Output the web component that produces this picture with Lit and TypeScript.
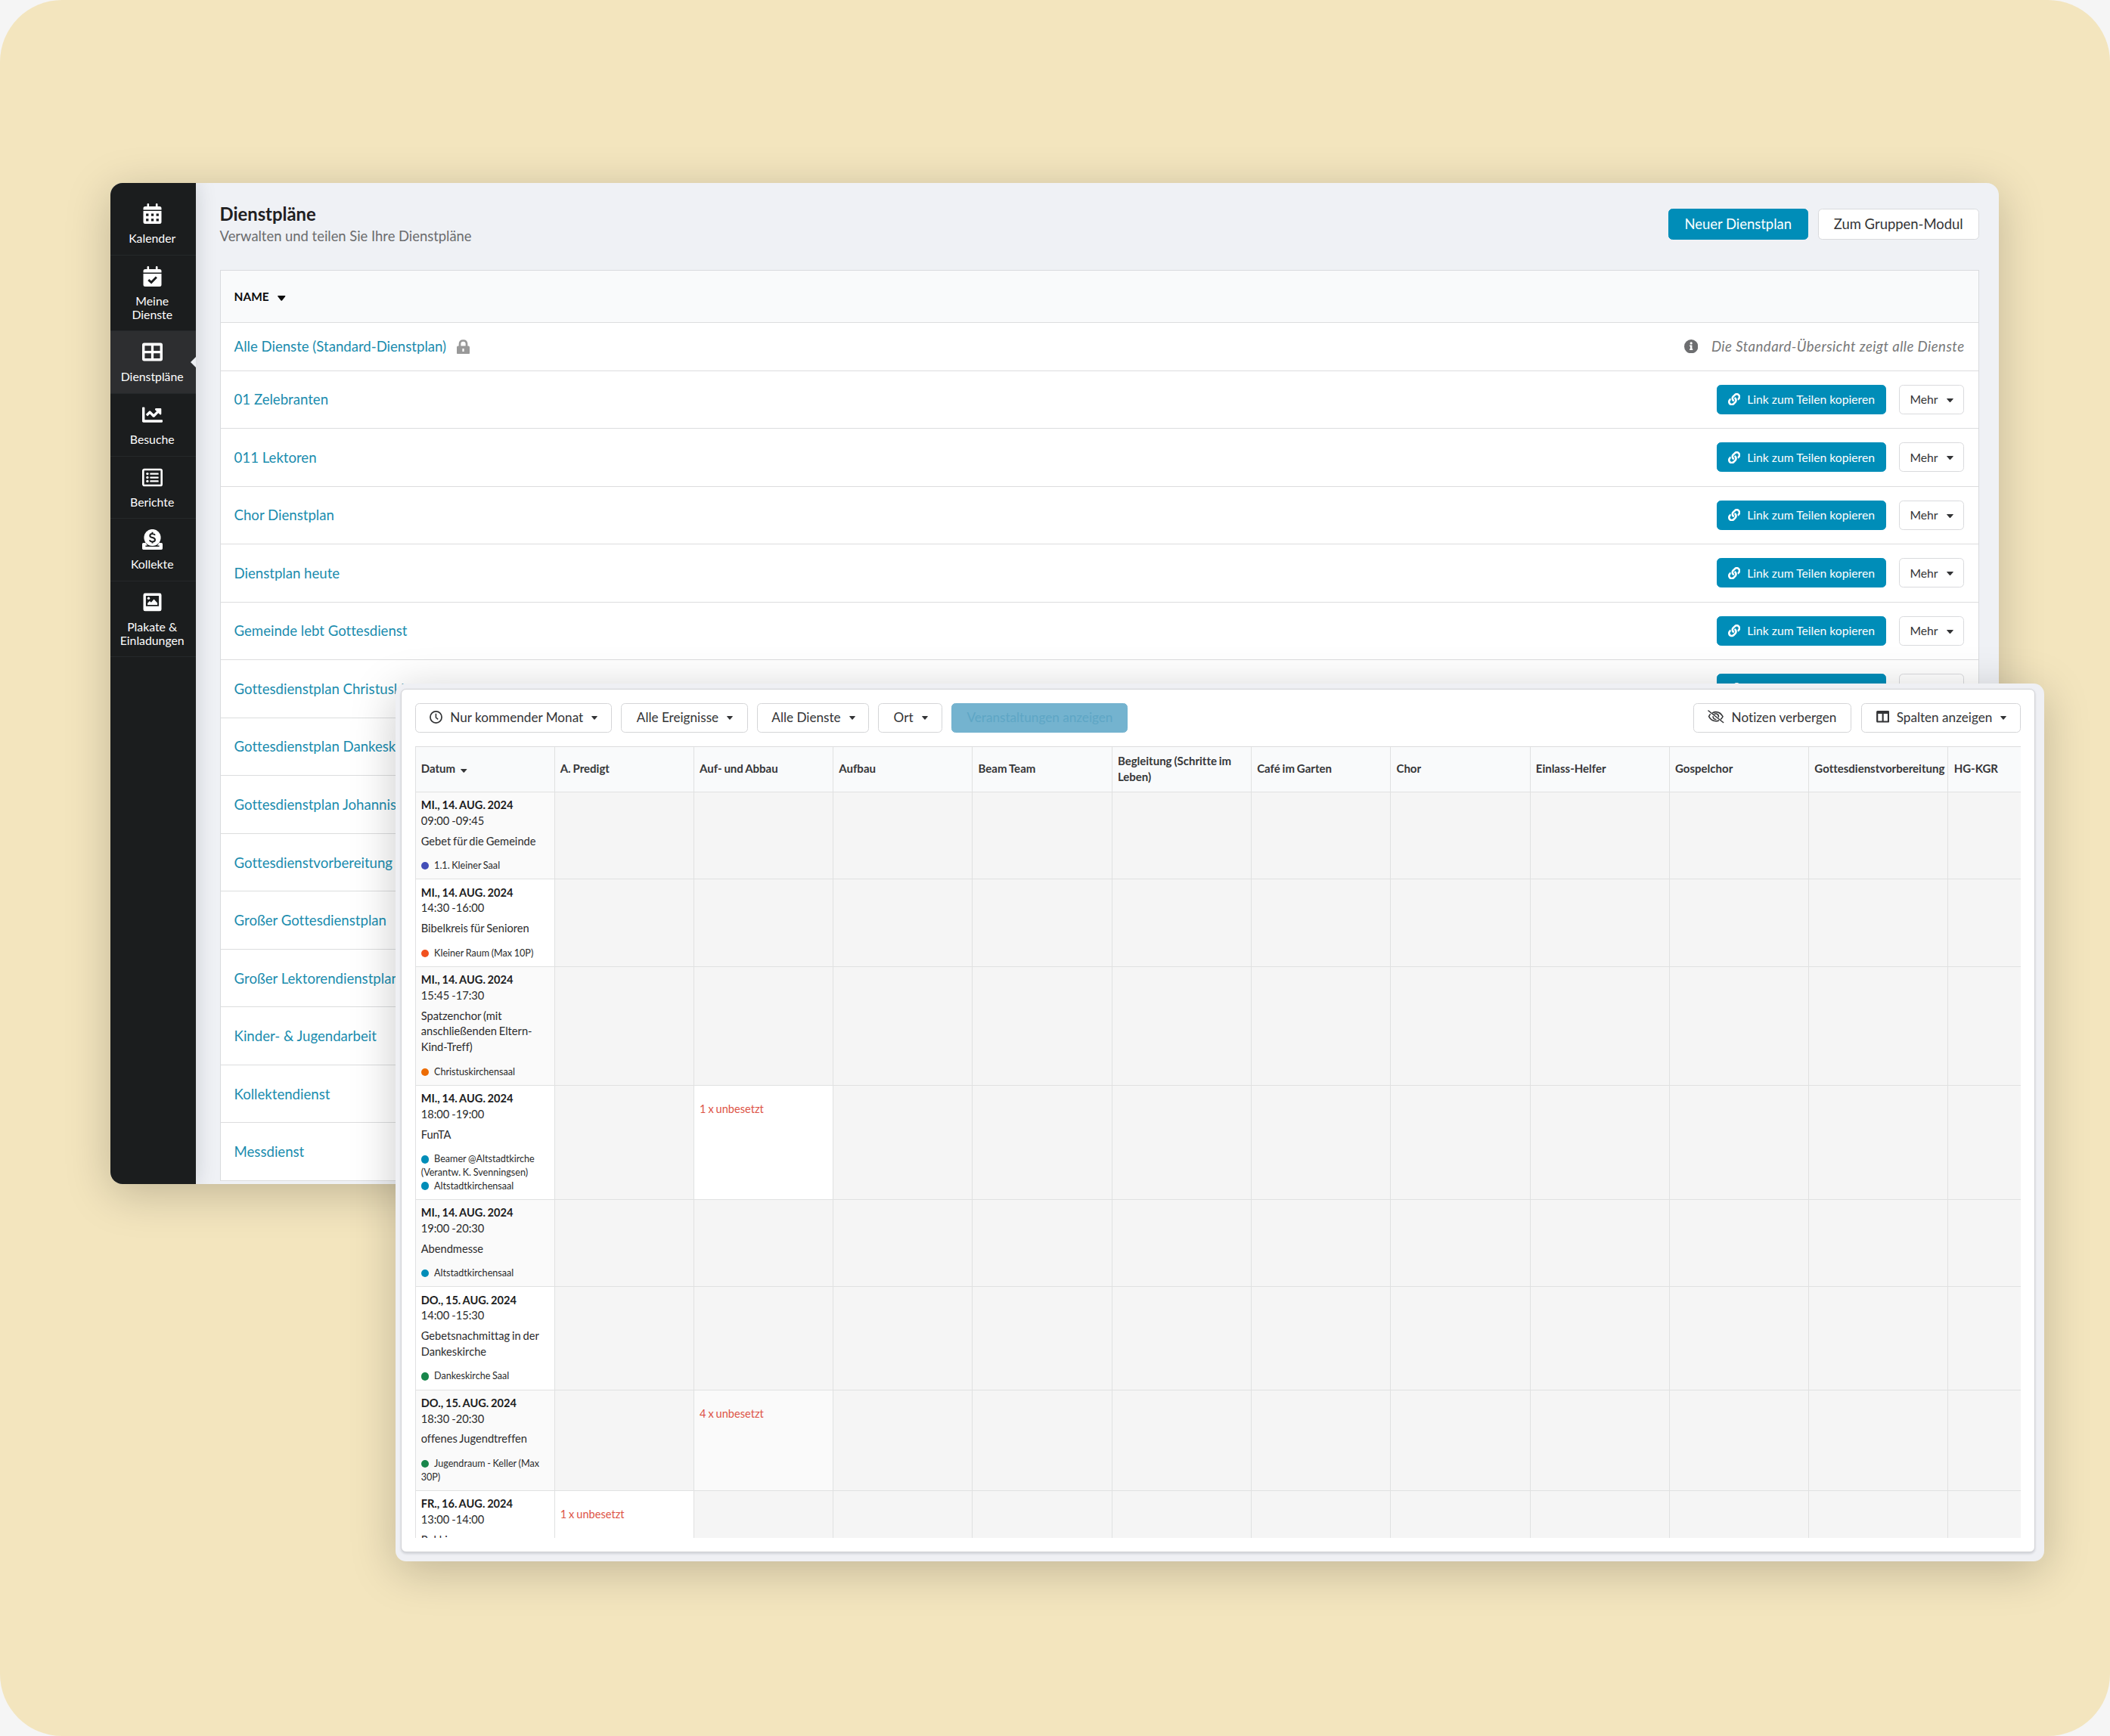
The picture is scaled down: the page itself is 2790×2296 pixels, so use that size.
import { LitElement, html, svg, css, nothing, type TemplateResult } from "lit";
import { customElement } from "lit/decorators.js";
import { classMap } from "lit/directives/class-map.js";
import { styleMap } from "lit/directives/style-map.js";

type IconName =
  | "calendar" | "check" | "table" | "chart" | "list" | "donate" | "poster"
  | "link" | "lock" | "info" | "clock" | "eyeoff" | "columns";

const CAL_TOP = "M3 4H5V1.2Q5 0 6.3 0T7.6 1.2V4H16.4V1.2Q16.4 0 17.7 0T19 1.2V4H21.5Q24 4 24 6.5V8.6H0V6.5Q0 4 2.5 4Z";

const icons: Record<IconName, { box: string; art: TemplateResult }> = {
  calendar: {
    box: "0 0 24 27",
    art: svg`<path fill-rule="evenodd" fill="currentColor" d="${CAL_TOP}M0 9.9H24V24.5Q24 27 21.5 27H2.5Q0 27 0 24.5ZM3.6 13.4V16.7H6.9V13.4ZM10.4 13.4V16.7H13.7V13.4ZM17.1 13.4V16.7H20.4V13.4ZM3.6 20.2V23.5H6.9V20.2ZM10.4 20.2V23.5H13.7V20.2ZM17.1 20.2V23.5H20.4V20.2Z"/>`,
  },
  check: {
    box: "0 0 24 27",
    art: svg`<path fill="currentColor" d="${CAL_TOP}M0 9.9H24V24.5Q24 27 21.5 27H2.5Q0 27 0 24.5Z"/>
      <path d="M6.8 18.2L10.6 21.6L17.4 14.6" fill="none" stroke="#1b1d1e" stroke-width="2.9"/>`,
  },
  table: {
    box: "0 0 27 27",
    art: svg`<path fill-rule="evenodd" fill="currentColor" d="M2.6 1.6H24.4Q27 1.6 27 4.2V22.8Q27 25.4 24.4 25.4H2.6Q0 25.4 0 22.8V4.2Q0 1.6 2.6 1.6ZM3.4 5.2V12H11.9V5.2ZM15.1 5.2V12H23.6V5.2ZM3.4 15.2V22H11.9V15.2ZM15.1 15.2V22H23.6V15.2Z"/>`,
  },
  chart: {
    box: "0 0 512 512",
    art: svg`<path fill="currentColor" d="M496 384H64V80c0-8.84-7.16-16-16-16H16C7.16 64 0 71.16 0 80v336c0 17.67 14.33 32 32 32h464c8.84 0 16-7.16 16-16v-32c0-8.84-7.16-16-16-16zM464 96H345.94c-21.38 0-32.09 25.85-16.97 40.97l32.4 32.4L288 242.75l-73.37-73.37c-12.5-12.5-32.76-12.5-45.25 0l-68.69 68.69c-6.25 6.25-6.25 16.38 0 22.63l22.62 22.62c6.25 6.25 16.38 6.25 22.63 0L192 237.25l73.37 73.37c12.5 12.5 32.76 12.5 45.25 0l96-96 32.4 32.4c15.12 15.12 40.97 4.41 40.97-16.97V112c.01-8.84-7.15-16-15.99-16z"/>`,
  },
  list: {
    box: "0 0 27 27",
    art: svg`<rect x="1.3" y="3" width="24.4" height="21" rx="1.6" fill="none" stroke="currentColor" stroke-width="2.6"/>
      <g fill="currentColor"><circle cx="6.9" cy="8.6" r="1.7"/><circle cx="6.9" cy="13.5" r="1.7"/><circle cx="6.9" cy="18.4" r="1.7"/>
      <rect x="10.3" y="7.5" width="11.4" height="2.3" rx=".6"/><rect x="10.3" y="12.4" width="11.4" height="2.3" rx=".6"/><rect x="10.3" y="17.3" width="11.4" height="2.3" rx=".6"/></g>`,
  },
  donate: {
    box: "0 0 27 27",
    art: svg`<path fill="currentColor" d="M1.6 18H4.6L7 21.6H4.4V23H22.6V21.6H20L22.4 18H25.4Q27 18 27 19.6V25.3Q27 27 25.4 27H1.6Q0 27 0 25.3V19.6Q0 18 1.6 18Z"/>
      <circle cx="13.5" cy="11" r="11.1" fill="currentColor"/>
      <path d="M16.9 7.9Q16.2 6 13.6 6Q10.3 6 10.3 8.4Q10.3 10.3 13.5 11Q17 11.8 17 14Q17 16.4 13.6 16.4Q10.6 16.4 9.9 14.2M13.5 3.8V6M13.5 16.2V18.4" fill="none" stroke="#1b1d1e" stroke-width="2"/>`,
  },
  poster: {
    box: "0 0 24 27",
    art: svg`<path fill-rule="evenodd" fill="currentColor" d="M2.4 1.5H21.6Q24 1.5 24 3.9V22.9Q24 25.3 21.6 25.3H2.4Q0 25.3 0 22.9V3.9Q0 1.5 2.4 1.5ZM3.4 4.9V18.7H20.6V4.9Z"/>
      <circle cx="7" cy="8.3" r="1.7" fill="currentColor"/><path fill="currentColor" d="M5.6 17V14.8L8.4 12L10.4 13.8L14 9.6L18.6 14.6V17Z"/>`,
  },
  link: {
    box: "0 0 512 512",
    art: svg`<path fill="currentColor" d="M326.612 185.391c59.747 59.809 58.927 155.698.36 214.59-.11.12-.24.25-.36.37l-67.2 67.2c-59.27 59.27-155.699 59.262-214.96 0-59.27-59.26-59.27-155.7 0-214.96l37.106-37.106c9.84-9.84 26.786-3.3 27.294 10.606.648 17.722 3.826 35.527 9.69 52.721 1.986 5.822.567 12.262-3.783 16.612l-13.087 13.087c-28.026 28.026-28.905 73.66-1.155 101.96 28.024 28.579 74.086 28.749 102.325.51l67.2-67.19c28.191-28.191 28.073-73.757 0-101.83-3.701-3.694-7.429-6.564-10.341-8.569a16.037 16.037 0 0 1-6.947-12.606c-.396-10.567 3.348-21.456 11.698-29.806l21.054-21.055c5.521-5.521 14.182-6.199 20.584-1.731a152.482 152.482 0 0 1 20.522 17.197zM467.547 44.449c-59.261-59.262-155.69-59.27-214.96 0l-67.2 67.2c-.12.12-.25.25-.36.37-58.566 58.892-59.387 154.781.36 214.59a152.454 152.454 0 0 0 20.521 17.196c6.402 4.468 15.064 3.789 20.584-1.731l21.054-21.055c8.35-8.35 12.094-19.239 11.698-29.806a16.037 16.037 0 0 0-6.947-12.606c-2.912-2.005-6.64-4.875-10.341-8.569-28.073-28.073-28.191-73.639 0-101.83l67.2-67.19c28.239-28.239 74.3-28.069 102.325.51 27.75 28.3 26.872 73.934-1.155 101.96l-13.087 13.087c-4.35 4.35-5.769 10.79-3.783 16.612 5.864 17.194 9.042 34.999 9.69 52.721.509 13.906 17.454 20.446 27.294 10.606l37.106-37.106c59.271-59.259 59.271-155.699.001-214.959z"/>`,
  },
  lock: {
    box: "0 0 17 19.5",
    art: svg`<path d="M4 9V5.8Q4 1.5 8.5 1.5T13 5.8V9" fill="none" stroke="currentColor" stroke-width="2.7"/>
      <path fill-rule="evenodd" fill="currentColor" d="M1.8 8.4H15.2Q17 8.4 17 10.2V17.7Q17 19.5 15.2 19.5H1.8Q0 19.5 0 17.7V10.2Q0 8.4 1.8 8.4ZM7.4 12V16H9.6V12Z"/>`,
  },
  info: {
    box: "0 0 18 18",
    art: svg`<circle cx="9" cy="9" r="9" fill="currentColor"/>
      <path fill="#fff" d="M9 3.3A1.55 1.55 0 1 1 9 6.4A1.55 1.55 0 1 1 9 3.3ZM7 7.4H10.2V12.1H11V13.7H7V12.1H7.8V9H7Z"/>`,
  },
  clock: {
    box: "0 0 17 17",
    art: svg`<circle cx="8.5" cy="8.5" r="7.6" fill="none" stroke="currentColor" stroke-width="1.7"/>
      <path d="M8.4 3.8V9L11.2 11.4" fill="none" stroke="currentColor" stroke-width="1.6"/>`,
  },
  eyeoff: {
    box: "0 0 22 18",
    art: svg`<g fill="none" stroke="currentColor" stroke-width="1.6" stroke-linecap="round">
      <path d="M1 1L21 16.8"/><path d="M6.8 3.8Q8.8 2.7 11 2.7Q17 2.7 20.4 8.9Q19.6 10.6 18 12.1"/>
      <path d="M3.4 5.9Q2.3 7.2 1.6 8.9Q5 15.1 11 15.1Q13 15.1 14.8 14.3"/>
      <path d="M9.3 5.4Q10.4 4.8 11.8 5.1Q15 6 14.7 9.3"/><path d="M7.2 8.9Q7.4 12.3 11 12.7"/></g>`,
  },
  columns: {
    box: "0 0 17 15.5",
    art: svg`<path fill-rule="evenodd" fill="currentColor" d="M1.5 0H15.5Q17 0 17 1.5V14Q17 15.5 15.5 15.5H1.5Q0 15.5 0 14V1.5Q0 0 1.5 0ZM2.2 4.1V13.4H7.5V4.1ZM9.6 4.1V13.4H14.8V4.1Z"/>`,
  },
};

const icon = (name: IconName, cls = "") =>
  html`<svg class="icon ${cls}" viewBox=${icons[name].box} aria-hidden="true">${icons[name].art}</svg>`;

const caret = (cls = "") =>
  html`<svg class="caret ${cls}" viewBox="0 0 10 6" preserveAspectRatio="none" aria-hidden="true"><path d="M.8 0H9.2Q10.4 .2 9.6 1L5.7 5.5Q5 6.2 4.3 5.5L.4 1Q-.4 .2 .8 0Z" fill="currentColor"/></svg>`;

const shared = css`
  * { box-sizing: border-box; }
  .icon, .caret { display: block; flex: none; }
  .btn {
    display: flex; align-items: center; justify-content: center; flex: none;
    border: 1px solid #d9dadd; border-radius: 5.5px; background: #fff; color: #333436; white-space: nowrap;
  }
  .btn.primary { background: #008db8; border-color: #008db8; color: #fff; }
`;

interface NavItem { icon: IconName; lines: string[]; active?: boolean }

const nav: NavItem[] = [
  { icon: "calendar", lines: ["Kalender"] },
  { icon: "check", lines: ["Meine", "Dienste"] },
  { icon: "table", lines: ["Dienstpläne"], active: true },
  { icon: "chart", lines: ["Besuche"] },
  { icon: "list", lines: ["Berichte"] },
  { icon: "donate", lines: ["Kollekte"] },
  { icon: "poster", lines: ["Plakate &", "Einladungen"] },
];

@customElement("side-nav")
class SideNav extends LitElement {
  static styles = [shared, css`
    :host {
      display: flex; flex-direction: column; flex: none; width: 113.4px; padding-top: 13.4px;
      background: #1b1d1e; color: #fff; position: relative; box-shadow: 0 0 26px rgba(20, 24, 40, .16);
    }
    .item {
      display: flex; flex-direction: column; align-items: center; position: relative;
      padding: 14px 3px 12.8px 0; border-bottom: 1px solid #25282a;
      font-size: 15.8px; line-height: 17.8px; text-align: center;
    }
    .item.active { background: #2d2e30; }
    .item.active::after {
      content: ""; position: absolute; right: 0; top: 34px;
      border: 7.5px solid transparent; border-right-color: #eceef2; border-left: 0;
    }
    .icon { width: 27px; height: 27px; margin-bottom: 10px; }
    .line { display: block; }
  `];
  render() {
    return nav.map((n) => html`
      <div class=${classMap({ item: true, active: !!n.active })}>
        ${icon(n.icon)}
        ${n.lines.map((l) => html`<span class="line">${l}</span>`)}
      </div>`);
  }
}

const plans = [
  "01 Zelebranten", "011 Lektoren", "Chor Dienstplan", "Dienstplan heute", "Gemeinde lebt Gottesdienst",
  "Gottesdienstplan Christuskirche", "Gottesdienstplan Dankeskirche", "Gottesdienstplan Johannis",
  "Gottesdienstvorbereitung", "Großer Gottesdienstplan", "Großer Lektorendienstplan",
  "Kinder- & Jugendarbeit", "Kollektendienst", "Messdienst",
];

@customElement("plan-list")
class PlanList extends LitElement {
  static styles = [shared, css`
    :host { display: block; flex: 1; min-width: 0; padding: 0 26.5px 0 31.2px; font-size: 18.6px; color: #1f2022; }
    .head { display: flex; justify-content: space-between; height: 115px; }
    .title { margin: 26px 0 0; font-size: 23.8px; line-height: 30px; font-weight: 700; }
    .sub { margin: 2px 0 0; font-size: 18.4px; line-height: 24px; color: #6b6c6e; }
    .actions { display: flex; gap: 13.5px; padding-top: 34.4px; }
    .actions .btn { height: 41px; font-size: 18.45px; width: 212.5px; padding-bottom: 1px; }
    .actions .btn.primary { width: 184.6px; }
    .grid { border: 1px solid #d9dbde; border-bottom: 0; background: #fff; }
    .row {
      display: flex; align-items: center; height: 76.54px; padding: 0 18px; border-bottom: 1px solid #dcddde;
    }
    .row.columns { height: 69px; background: #f9fafb; font-size: 15.4px; font-weight: 700; color: #0c0c0d; }
    .row.first { height: 63.5px; }
    .row.columns .caret { width: 10.5px; height: 7px; margin: 4px 0 0 11.5px; }
    .name { flex: 1; display: flex; align-items: center; color: #1a8cae; white-space: nowrap; }
    .name .icon { width: 17px; height: 19.5px; margin-left: 13.5px; color: #999; }
    .note { display: flex; align-items: center; color: #777879; font-style: italic; letter-spacing: .45px; }
    .note .icon { width: 18.4px; height: 18.4px; margin-right: 18px; color: #6d6e70; }
    .row .btn { height: 39px; font-size: 15.7px; width: 86px; margin-left: 17px; margin-right: .5px; }
    .row .btn.primary { width: 224.5px; margin: 0; }
    .btn .icon { width: 16.3px; height: 16.3px; margin-right: 9.5px; }
    .btn .caret { width: 9px; height: 5.2px; margin: 2px 0 0 11px; }
  `];
  render() {
    return html`
      <div class="head">
        <div>
          <h1 class="title">Dienstpläne</h1>
          <p class="sub">Verwalten und teilen Sie Ihre Dienstpläne</p>
        </div>
        <div class="actions">
          <div class="btn primary">Neuer Dienstplan</div>
          <div class="btn">Zum Gruppen-Modul</div>
        </div>
      </div>
      <div class="grid">
        <div class="row columns">NAME ${caret()}</div>
        <div class="row first">
          <div class="name">Alle Dienste (Standard-Dienstplan)${icon("lock")}</div>
          <div class="note">${icon("info")}Die Standard-Übersicht zeigt alle Dienste</div>
        </div>
        ${plans.map((p) => html`
          <div class="row">
            <div class="name">${p}</div>
            <div class="btn primary">${icon("link")}Link zum Teilen kopieren</div>
            <div class="btn">Mehr${caret()}</div>
          </div>`)}
      </div>`;
  }
}

interface Room { color: string; name: string }
interface EventRow { date: string; time: string; name: string; rooms: Room[]; open?: [number, string] }

const columns = [
  "A. Predigt", "Auf- und Abbau", "Aufbau", "Beam Team", "Begleitung (Schritte im Leben)", "Café im Garten",
  "Chor", "Einlass-Helfer", "Gospelchor", "Gottesdienstvorbereitung", "HG-KGR",
];

const BLUE = "#008db8";
const GREEN = "#18864b";

const events: EventRow[] = [
  { date: "MI., 14. AUG. 2024", time: "09:00 -09:45", name: "Gebet für die Gemeinde", rooms: [{ color: "#444fb8", name: "1.1. Kleiner Saal" }] },
  { date: "MI., 14. AUG. 2024", time: "14:30 -16:00", name: "Bibelkreis für Senioren", rooms: [{ color: "#f1511f", name: "Kleiner Raum (Max 10P)" }] },
  { date: "MI., 14. AUG. 2024", time: "15:45 -17:30", name: "Spatzenchor (mit anschließenden Eltern-Kind-Treff)", rooms: [{ color: "#ec6c04", name: "Christuskirchensaal" }] },
  { date: "MI., 14. AUG. 2024", time: "18:00 -19:00", name: "FunTA", rooms: [{ color: BLUE, name: "Beamer @Altstadtkirche (Verantw. K. Svenningsen)" }, { color: BLUE, name: "Altstadtkirchensaal" }], open: [1, "1 x unbesetzt"] },
  { date: "MI., 14. AUG. 2024", time: "19:00 -20:30", name: "Abendmesse", rooms: [{ color: BLUE, name: "Altstadtkirchensaal" }] },
  { date: "DO., 15. AUG. 2024", time: "14:00 -15:30", name: "Gebetsnachmittag in der Dankeskirche", rooms: [{ color: GREEN, name: "Dankeskirche Saal" }] },
  { date: "DO., 15. AUG. 2024", time: "18:30 -20:30", name: "offenes Jugendtreffen", rooms: [{ color: GREEN, name: "Jugendraum - Keller (Max 30P)" }], open: [1, "4 x unbesetzt"] },
  { date: "FR., 16. AUG. 2024", time: "13:00 -14:00", name: "Pokki", rooms: [], open: [0, "1 x unbesetzt"] },
];

@customElement("duty-board")
class DutyBoard extends LitElement {
  static styles = [shared, css`
    :host {
      display: flex; flex-direction: column; height: 100%; padding: 18px 18.5px 18.5px 18px; background: #fff;
      border: 1px solid #d3d4d7; border-radius: 7px; box-shadow: 0 1.5px 3px rgba(30, 34, 50, .15); color: #2a2b2c;
    }
    .bar { display: flex; gap: 12.7px; height: 57.3px; flex: none; }
    .bar .btn { height: 39px; font-size: 17.15px; border-color: #d4d5d7; padding-bottom: 1px; }
    .bar .period { width: 260.2px; }
    .bar .kinds { width: 167.2px; }
    .bar .duties { width: 147.5px; }
    .bar .place { width: 84.3px; }
    .bar .notes { width: 209.2px; }
    .bar .shown { width: 210.8px; }
    .bar .btn.primary { width: 233px; background: #74b3cf; border-color: #74b3cf; color: #5ea6c5; }
    .spacer { flex: 1; }
    .bar .clock { width: 17px; height: 17px; margin: -1px 10.3px 0 0; }
    .bar .eyeoff { width: 21.6px; height: 17.7px; margin: -1px 10px 0 -1px; }
    .bar .columns { width: 17.2px; height: 15.5px; margin: -1px 10px 0 0; }
    .bar .caret { width: 8px; height: 4.8px; margin: 2px -1px 0 11px; }
    .sheet { flex: 1; min-height: 0; overflow: hidden; border-top: 1px solid #dcddde; border-left: 1px solid #e0e1e2; }
    .line { display: grid; grid-template-columns: 184px repeat(10, 184.3px) 1fr; border-bottom: 1px solid #e0e1e1; }
    .line.top { height: 59.9px; background: #f9fafb; font-size: 15px; font-weight: 700; line-height: 20.7px; color: #353638; word-spacing: -.6px; }
    .line.top .cell { display: flex; align-items: center; background: none; padding: 0 0 1px 7.2px; }
    .line.top .caret { width: 8.5px; height: 5px; margin: 5px 0 0 7px; }
    .cell { background: #f5f5f5; border-right: 1px solid #e0e1e1; padding: 0 7.2px; min-width: 0; word-spacing: -.8px; }
    .cell:last-child { border-right: 0; }
    .cell.when { background: #fff; padding: 7.5px 7.2px 8.5px; font-size: 14.65px; line-height: 20.7px; }
    .cell.open { background: #fff; padding-top: 21.5px; font-size: 14.6px; line-height: 20.7px; color: #dd5346; }
    .line.odd .when, .line.odd .open { background: #fafafa; }
    .date { font-weight: 700; font-size: 14.6px; color: #1c1d1e; white-space: nowrap; }
    .title { margin-top: 6px; }
    .rooms { margin-top: 12.9px; font-size: 12.6px; line-height: 17.6px; word-spacing: -.6px; }
    .dot { display: inline-block; width: 10.4px; height: 10.4px; border-radius: 50%; margin: 0 7px -1.2px 0; }
  `];
  render() {
    return html`
      <div class="bar">
        <div class="btn period">${icon("clock", "clock")}Nur kommender Monat${caret()}</div>
        <div class="btn kinds">Alle Ereignisse${caret()}</div>
        <div class="btn duties">Alle Dienste${caret()}</div>
        <div class="btn place">Ort${caret()}</div>
        <div class="btn primary">Veranstaltungen anzeigen</div>
        <div class="spacer"></div>
        <div class="btn notes">${icon("eyeoff", "eyeoff")}Notizen verbergen</div>
        <div class="btn shown">${icon("columns", "columns")}Spalten anzeigen${caret()}</div>
      </div>
      <div class="sheet">
        <div class="line top">
          <div class="cell">Datum${caret()}</div>
          ${columns.map((c) => html`<div class="cell">${c}</div>`)}
        </div>
        ${events.map((e, i) => html`
          <div class=${classMap({ line: true, odd: i % 2 === 0 })}>
            <div class="cell when">
              <div class="date">${e.date}</div>
              <div>${e.time}</div>
              <div class="title">${e.name}</div>
              <div class="rooms">${e.rooms.map((r) => html`<div><span class="dot" style=${styleMap({ background: r.color })}></span>${r.name}</div>`)}</div>
            </div>
            ${columns.map((_, c) => {
              const open = e.open && e.open[0] === c;
              return html`<div class=${classMap({ cell: true, open: !!open })}>${open ? e.open![1] : nothing}</div>`;
            })}
          </div>`)}
      </div>`;
  }
}

@customElement("app-root")
class AppRoot extends LitElement {
  static styles = [shared, css`
    :host {
      display: block; width: 2790px; height: 2296px; background: #f5f5f5;
      font-family: Lato, "Liberation Sans", sans-serif; font-variant-ligatures: none;
    }
    .stage { position: relative; width: 100%; height: 100%; border-radius: 82px; background: #f3e5be; overflow: hidden; }
    .window { position: absolute; box-shadow: 0 12px 60px rgba(0, 0, 0, .21); }
    .back { left: 146px; top: 242px; width: 2497px; height: 1324px; border-radius: 16px; background: #eff1f5; }
    .clip { display: flex; width: 100%; height: 100%; border-radius: inherit; overflow: hidden; }
    .front { left: 523px; top: 904px; width: 2179.7px; height: 1161.3px; padding: 6.5px 11.4px 12px 6.5px; border-radius: 14px; background: #eff0f4; }
  `];
  render() {
    return html`
      <div class="stage">
        <div class="window back"><div class="clip"><side-nav></side-nav><plan-list></plan-list></div></div>
        <div class="window front"><duty-board></duty-board></div>
      </div>`;
  }
}
